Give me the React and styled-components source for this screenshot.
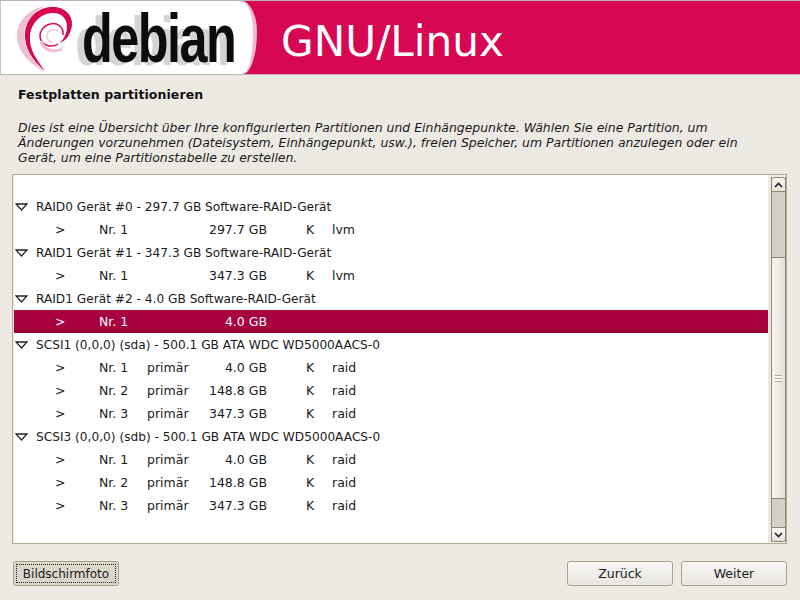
import React from "react";
import styled, { createGlobalStyle } from "styled-components";

const Global = createGlobalStyle`
  html, body { margin: 0; padding: 0; background: #edeae4; }
  body { font-family: "DejaVu Sans", sans-serif; font-size: 12.5px; color: #1a1a1a; }
`;
const Page = styled.div`
  width: 800px; height: 600px; display: flex; flex-direction: column; overflow: hidden; background: #edeae4;
`;
const Banner = styled.header`
  height: 73px; flex: none; display: flex; align-items: stretch; background: #d70751;
  border-top: 1px solid #b8b5b0; border-bottom: 1px solid #b8b5b0; box-sizing: content-box;
`;
const LogoArea = styled.div`
  width: 252px; flex: none; display: flex; align-items: flex-start; background: #fff;
  border-right: 4px solid #f0b9cc; border-radius: 0 16px 14px 0 / 0 42% 58% 0;
  border-left: 1px solid #c9c6c2; box-sizing: content-box;
`;
const Swirl = styled.svg`
  width: 60px; height: 72px; margin: 0 0 0 14px; flex: none;
`;
const WordmarkSlot = styled.div`
  width: 152px; height: 64px; margin: 6px 0 0 7px; flex: none;
`;
const Wordmark = styled.div`
  font-family: "Liberation Sans", sans-serif; font-weight: 700; font-size: 68px; line-height: 62px;
  color: #0c0c0c; letter-spacing: -2px; transform: scaleX(0.74); transform-origin: left top;
  text-shadow: -9px 3px 1px #d4d4d4; white-space: nowrap; width: 205px;
`;
const BannerTitle = styled.div`
  font-family: "DejaVu Sans", sans-serif; font-size: 42.2px; line-height: 74px; color: #fff;
  margin-left: 24px; white-space: nowrap; padding-top: 4px;
`;
const Content = styled.main`
  flex: none; display: flex; flex-direction: column; padding: 0 13px 0 12px;
`;
const Heading = styled.h1`
  font: bold 12.5px/15px "DejaVu Sans", sans-serif; letter-spacing: 0.08px; margin: 12px 0 0 6px; color: #111;
`;
const Description = styled.p`
  font: italic 12.45px/15px "DejaVu Sans", sans-serif; margin: 18px 0 0 6px; color: #1a1a1a; width: 750px;
`;
const Frame = styled.div`
  margin-top: 9px; height: 367px; flex: none; display: flex; background: #edeae4;
  border: 1px solid #b7ab98; padding: 1px 0 0 1px;
`;
const List = styled.div`
  flex: 1; padding-top: 20px; min-width: 0; margin-right: 3px; background: #fff; margin-top: -1px;
`;
const Row = styled.div`
  height: 23px; display: flex; align-items: center; white-space: nowrap; color: ${p => (p.$sel ? "#fff" : "#1a1a1a")};
  background: ${p => (p.$sel ? "linear-gradient(#a80340, #a80340 70%, #940337)" : "transparent")};
`;
const HeadText = styled.span`
  font-size: 12.17px;
`;
const Toggle = styled.svg`
  width: 13px; height: 8px; margin: 0 8px 0 1px; flex: none;
`;
const Cell = styled.span`
  flex: none; width: ${p => p.$w}px; text-align: ${p => p.$right ? "right" : "left"}; margin-left: ${p => p.$ml || 0}px;
`;
const Scrollbar = styled.div`
  width: 13px; flex: none; display: flex; flex-direction: column; background: #d6d1c7; margin: 1px 0 1px 0;
  border-left: 1px solid #8f8674; border-right: 1px solid #8f8674; box-sizing: content-box;
`;
const Arrow = styled.div`
  height: 13px; flex: none; background: linear-gradient(#f8f7f4, #e6e2da); display: flex; align-items: center; justify-content: center;
  border-${p => (p.$up ? "bottom" : "top")}: 1px solid #8f8674;
  border-${p => (p.$up ? "top" : "bottom")}: 1px solid #8f8674;
  border-radius: ${p => (p.$up ? "3px 3px 0 0" : "0 0 3px 3px")};
`;
const Trough = styled.div`
  flex: 1; display: flex; flex-direction: column; padding: 65px 0 28px;
`;
const Thumb = styled.div`
  flex: 1; background: linear-gradient(90deg, #f6f4f0, #e4e0d8); border-top: 1px solid #8f8674; border-bottom: 1px solid #8f8674;
  display: flex; align-items: center; justify-content: center;
`;
const Grip = styled.div`
  width: 7px; height: 7px;
  background: repeating-linear-gradient(#b7ab98 0 1px, #f8f7f4 1px 3px);
`;
const Footer = styled.footer`
  flex: 1; display: flex; align-items: flex-start; justify-content: space-between; padding: 17px 13px 0 13px;
`;
const Buttons = styled.div`
  display: flex; gap: 8px;
`;
const Button = styled.button`
  font: 12.5px "DejaVu Sans", sans-serif; color: #1a1a1a; height: 25px; width: ${p => p.$w}px; padding: 0;
  border: 1px solid #a89f8d; border-radius: 3px; background: linear-gradient(#f8f7f4, #e9e6df); display: flex; align-items: center; justify-content: center;
`;
const ShotButton = styled(Button)`
  background: #dcd6cb; position: relative; font-size: 12px;
  &::after { content: ""; position: absolute; inset: 2px; border: 1px dotted #222; }
`;

const Tri = () => (
  <Toggle viewBox="0 0 13 8"><path d="M1 1 H12 L6.5 7 Z" fill="#fff" stroke="#222" strokeWidth="1.3" /></Toggle>
);
const Head = ({ t }) => <Row><Tri /><HeadText>{t}</HeadText></Row>;
const Part = ({ n, type = "", size, k = "", fs = "", sel }) => (
  <Row $sel={sel}>
    <Cell $ml={41} $w={44}>&gt;</Cell>
    <Cell $w={48}>Nr. {n}</Cell>
    <Cell $w={50}>{type}</Cell>
    <Cell $w={70} $right>{size}</Cell>
    <Cell $ml={39} $w={26}>{k}</Cell>
    <Cell $w={60}>{fs}</Cell>
  </Row>
);

export default function App() {
  return (
    <Page>
      <Global />
      <Banner>
        <LogoArea>
          <Swirl viewBox="0 0 60 72">
            <path d="M30 5 C14 8 1 20 2 36 C3 52 16 64 30 71 C19 60 9 50 9 35 C9 21 18 10 30 5 Z" fill="#f1bfd0" />
            <path d="M57 24 C58 13 48 5 36 6 C20 7 9 20 10 37 C11 52 22 63 30 70 C21 58 14 48 15 35 C16 22 26 12 38 12 C47 12 52 18 52 26 C52 33 48 39 45 42 C51 40 56 33 57 24 Z" fill="#d70751" />
            <path d="M48 34 C49 26 42 21 35 23 C27 25 23 33 26 39 C29 45 37 47 43 43" fill="none" stroke="#d70751" strokeWidth="1.5" />
            <path d="M26 40 C29 50 39 52 47 48" fill="none" stroke="#f1bfd0" strokeWidth="3" />
            <path d="M43 30 C39 27 33 29 32 34 C31 38 34 41 38 41" fill="none" stroke="#f1bfd0" strokeWidth="1.2" />
          </Swirl>
          <WordmarkSlot><Wordmark>debian</Wordmark></WordmarkSlot>
        </LogoArea>
        <BannerTitle>GNU/Linux</BannerTitle>
      </Banner>
      <Content>
        <Heading>Festplatten partitionieren</Heading>
        <Description>
          Dies ist eine Übersicht über Ihre konfigurierten Partitionen und Einhängepunkte. Wählen Sie eine Partition, um Änderungen vorzunehmen (Dateisystem, Einhängepunkt, usw.), freien Speicher, um Partitionen anzulegen oder ein Gerät, um eine Partitionstabelle zu erstellen.
        </Description>
        <Frame>
          <List>
            <Head t="RAID0 Gerät #0 - 297.7 GB Software-RAID-Gerät" />
            <Part n={1} size="297.7 GB" k="K" fs="lvm" />
            <Head t="RAID1 Gerät #1 - 347.3 GB Software-RAID-Gerät" />
            <Part n={1} size="347.3 GB" k="K" fs="lvm" />
            <Head t="RAID1 Gerät #2 - 4.0 GB Software-RAID-Gerät" />
            <Part n={1} size="4.0 GB" sel />
            <Head t="SCSI1 (0,0,0) (sda) - 500.1 GB ATA WDC WD5000AACS-0" />
            <Part n={1} type="primär" size="4.0 GB" k="K" fs="raid" />
            <Part n={2} type="primär" size="148.8 GB" k="K" fs="raid" />
            <Part n={3} type="primär" size="347.3 GB" k="K" fs="raid" />
            <Head t="SCSI3 (0,0,0) (sdb) - 500.1 GB ATA WDC WD5000AACS-0" />
            <Part n={1} type="primär" size="4.0 GB" k="K" fs="raid" />
            <Part n={2} type="primär" size="148.8 GB" k="K" fs="raid" />
            <Part n={3} type="primär" size="347.3 GB" k="K" fs="raid" />
          </List>
          <Scrollbar>
            <Arrow $up>
              <svg width="9" height="6" viewBox="0 0 9 6"><path d="M1 5 L4.5 1.5 L8 5" fill="none" stroke="#222" strokeWidth="1.6" /></svg>
            </Arrow>
            <Trough><Thumb><Grip /></Thumb></Trough>
            <Arrow>
              <svg width="9" height="6" viewBox="0 0 9 6"><path d="M1 1 L4.5 4.5 L8 1" fill="none" stroke="#222" strokeWidth="1.6" /></svg>
            </Arrow>
          </Scrollbar>
        </Frame>
      </Content>
      <Footer>
        <ShotButton $w={106}>Bildschirmfoto</ShotButton>
        <Buttons>
          <Button $w={106}>Zurück</Button>
          <Button $w={106}>Weiter</Button>
        </Buttons>
      </Footer>
    </Page>
  );
}
